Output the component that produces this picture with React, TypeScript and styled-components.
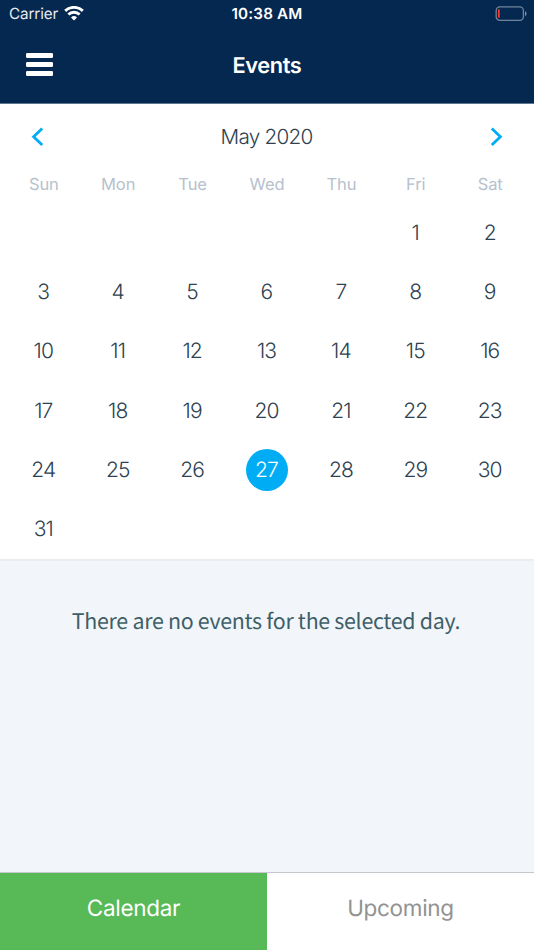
import React, { useState } from "react";
import styled, { createGlobalStyle } from "styled-components";

const GlobalStyle = createGlobalStyle`
  * { box-sizing: border-box; }
  body { margin: 0; background: #f2f6fa; text-rendering: geometricPrecision; }
  button { border: 0; padding: 0; margin: 0; background: none; font: inherit; color: inherit; cursor: pointer; text-rendering: inherit; }
`;

const Screen = styled.div`
  display: flex;
  flex-direction: column;
  width: 100%;
  height: 100vh;
  overflow: hidden;
  background: #f2f6fa;
  font-family: Inter, "Liberation Sans", sans-serif;
`;

const Header = styled.header`
  height: 104px;
  flex: none;
  background: #052850;
  border-bottom: 1px solid #5f7690;
  color: #fff;
`;

const StatusBar = styled.div`
  display: grid;
  grid-template-columns: 1fr auto 1fr;
  align-items: center;
  height: 27px;
  padding: 0 7px 0 9px;
`;

const Carrier = styled.div`
  display: flex;
  align-items: center;
  gap: 6px;
  font-size: 15.2px;
  letter-spacing: -0.1px;
  line-height: 27px;
  color: #e6eaee;
`;

const Clock = styled.div`
  padding-right: 2px;
  font-size: 15.2px;
  font-weight: 600;
  letter-spacing: 0.2px;
  line-height: 27px;
`;

const BatteryIcon = styled.svg`
  justify-self: end;
`;

const NavBar = styled.div`
  display: grid;
  grid-template-columns: 1fr auto 1fr;
  align-items: center;
  height: 76px;
  padding: 0 26px;
`;

const MenuButton = styled.button`
  display: flex;
  flex-direction: column;
  gap: 4px;
  width: 27px;
  padding-bottom: 1px;
`;

const MenuLine = styled.span`
  height: 5px;
  border-radius: 1.3px;
  background: #fff;
`;

const Title = styled.h1`
  margin: 0;
  padding-top: 2px;
  font-size: 21.8px;
  font-weight: 600;
  letter-spacing: -0.4px;
`;

const Calendar = styled.section`
  flex: none;
  height: 457px;
  padding: 0 6.6px;
  background: #fff;
  border-bottom: 2px solid #ebedef;
`;

const MonthBar = styled.div`
  display: flex;
  align-items: center;
  justify-content: space-between;
  height: 66px;
  padding: 0 24.4px;
`;

const MonthLabel = styled.div`
  padding-right: 1px;
  font-size: 20.7px;
  font-weight: 300;
  line-height: 26px;
  letter-spacing: -0.75px;
  color: #2d4150;
`;

const ArrowButton = styled.button`
  display: flex;
`;

const WeekRow = styled.div`
  display: grid;
  grid-template-columns: repeat(7, 1fr);
  height: 33px;
  line-height: 29px;
  text-align: center;
  font-size: 16.5px;
  letter-spacing: -0.1px;
  color: #b6c1cd;
`;

const DayGrid = styled.div`
  display: grid;
  grid-template-columns: repeat(7, 1fr);
  grid-auto-rows: 59.35px;
  justify-items: center;
  align-items: center;
`;

const Day = styled.button<{ $selected: boolean; $firstColumn?: number }>`
  width: 42px;
  height: 42px;
  padding-right: 1px;
  border-radius: 50%;
  grid-column-start: ${(p) => p.$firstColumn ?? "auto"};
  background: ${(p) => (p.$selected ? "#00adf5" : "transparent")};
  color: ${(p) => (p.$selected ? "#fff" : "#2d4150")};
  font-size: 21px;
  font-weight: 300;
  letter-spacing: -0.9px;
  line-height: 44px;
`;

const Agenda = styled.main`
  flex: 1;
  padding-top: 42px;
  padding-right: 2px;
  text-align: center;
  font-family: "Noto Sans CJK SC", "Noto Sans", sans-serif;
  font-size: 21.4px;
  letter-spacing: -0.3px;
  line-height: 36px;
  color: #3f5f68;
`;

const TabBar = styled.nav`
  display: grid;
  grid-template-columns: 1fr 1fr;
  flex: none;
  height: 78px;
  border-top: 1px solid #c3c8cc;
`;

const Tab = styled.button<{ $active: boolean }>`
  padding-bottom: 6px;
  background: ${(p) => (p.$active ? "#58b957" : "#fff")};
  color: ${(p) => (p.$active ? "#fff" : "#929292")};
  font-size: 22.5px;
  letter-spacing: -0.3px;
`;

const weekdays = ["Sun", "Mon", "Tue", "Wed", "Thu", "Fri", "Sat"];
const days = Array.from({ length: 31 }, (_, i) => i + 1);
const tabs = ["Calendar", "Upcoming"];

function Wifi() {
  return (
    <svg width="20" height="15" viewBox="0 0 20 15" fill="none" stroke="#fff" strokeWidth="2.9">
      <path d="M1.2 4.9A12.7 12.7 0 0 1 18.8 4.9" />
      <path d="M4.4 8.5A8 8 0 0 1 15.6 8.5" />
      <path d="M10 14.4L7 11.4A4.4 4.4 0 0 1 13 11.4Z" fill="#fff" stroke="none" />
    </svg>
  );
}

function Battery() {
  return (
    <BatteryIcon width="32" height="16" viewBox="0 0 32 16" fill="none">
      <rect x="1.2" y="0.9" width="27.2" height="13.4" rx="3.6" stroke="#71849b" strokeWidth="1.3" />
      <rect x="3" y="3.3" width="1.7" height="8.4" rx="0.4" fill="#ff3b30" />
      <path d="M30 5.2C32 5.9 32 9.3 30 10Z" fill="#8292a6" />
    </BatteryIcon>
  );
}

function Chevron({ points }: { points: string }) {
  return (
    <svg width="13" height="20" viewBox="0 0 13 20" fill="none" stroke="#00adf5" strokeWidth="2.8">
      <polyline points={points} />
    </svg>
  );
}

export default function App() {
  const [selected, setSelected] = useState(27);
  const [tab, setTab] = useState("Calendar");

  return (
    <Screen>
      <GlobalStyle />
      <Header>
        <StatusBar>
          <Carrier>
            Carrier
            <Wifi />
          </Carrier>
          <Clock>10:38 AM</Clock>
          <Battery />
        </StatusBar>
        <NavBar>
          <MenuButton aria-label="Menu">
            <MenuLine />
            <MenuLine />
            <MenuLine />
          </MenuButton>
          <Title>Events</Title>
        </NavBar>
      </Header>
      <Calendar>
        <MonthBar>
          <ArrowButton aria-label="Previous month">
            <Chevron points="11.2,1.4 2.6,9.7 11.2,18" />
          </ArrowButton>
          <MonthLabel>May 2020</MonthLabel>
          <ArrowButton aria-label="Next month">
            <Chevron points="1.8,1.4 10.4,9.7 1.8,18" />
          </ArrowButton>
        </MonthBar>
        <WeekRow>
          {weekdays.map((name) => (
            <span key={name}>{name}</span>
          ))}
        </WeekRow>
        <DayGrid>
          {days.map((day) => (
            <Day
              key={day}
              $selected={day === selected}
              $firstColumn={day === 1 ? 6 : undefined}
              onClick={() => setSelected(day)}
            >
              {day}
            </Day>
          ))}
        </DayGrid>
      </Calendar>
      <Agenda>There are no events for the selected day.</Agenda>
      <TabBar>
        {tabs.map((name) => (
          <Tab key={name} $active={name === tab} onClick={() => setTab(name)}>
            {name}
          </Tab>
        ))}
      </TabBar>
    </Screen>
  );
}
